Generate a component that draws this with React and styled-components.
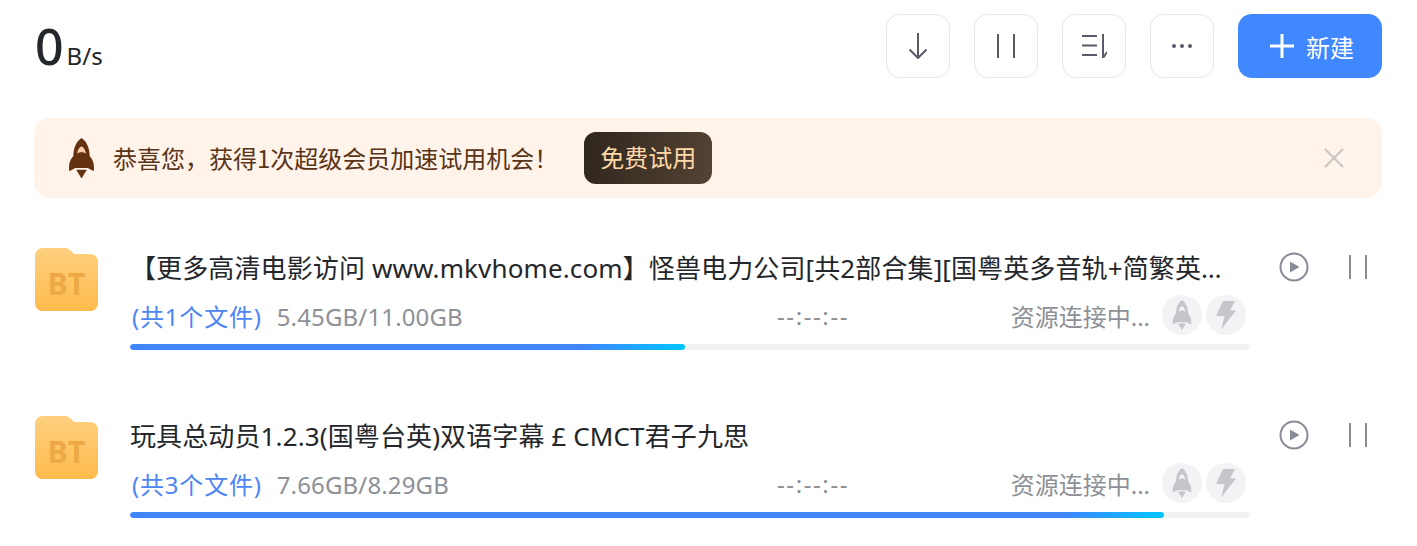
import styled, { createGlobalStyle } from 'styled-components'

const GlobalStyle = createGlobalStyle`
html, body {
  margin: 0;
  padding: 0;
  background: #fff;
  overflow: hidden;
  font-family: "Noto Sans", "Noto Sans CJK SC", sans-serif;
}
* { box-sizing: border-box; }
`;

const Page = styled.div`
display: flex;
flex-direction: column;
width: 1417px;
height: 546px;
padding: 14px 35px 0 34px;
`;

const Header = styled.div`
display: flex;
align-items: center;
justify-content: space-between;
height: 64px;
`;

const Speed = styled.div`
display: flex;
align-items: baseline;
color: #23262b;
padding-left: 1px;
`;

const SpeedValue = styled.span`
font-size: 50px;
font-weight: 500;
line-height: 64px;
margin-right: 3px;
`;

const SpeedUnit = styled.span`
font-size: 24px;
`;

const Toolbar = styled.div`
display: flex;
gap: 24px;
`;

const IconButton = styled.div`
display: flex;
align-items: center;
justify-content: center;
width: 64px;
height: 64px;
border: 1px solid #e6e7e9;
border-radius: 14px;
background: #fff;
color: #575b68;
`;

const NewButton = styled.div`
display: flex;
align-items: center;
justify-content: center;
gap: 12px;
width: 144px;
height: 64px;
padding-left: 4px;
border-radius: 14px;
background: #4088ff;
color: #fff;
font-size: 24px;
font-family: "Noto Sans CJK SC", sans-serif;
`;

const Banner = styled.div`
display: flex;
align-items: center;
height: 80px;
margin-top: 40px;
padding: 0 38px 0 34px;
border-radius: 16px;
background: #fff3ea;
`;

const BannerText = styled.div`
margin: -2px 0 0 18px;
color: #5a3417;
font-size: 24px;
font-family: "Noto Sans CJK SC", sans-serif;
`;

const TrialButton = styled.div`
display: flex;
align-items: center;
justify-content: center;
width: 128px;
height: 52px;
margin: 0 0 0 26px;
padding-bottom: 3px;
border-radius: 12px;
background: linear-gradient(100deg, #2f261d, #544334);
color: #ffd9a8;
font-size: 24px;
font-family: "Noto Sans CJK SC", sans-serif;
`;

const BannerClose = styled.div`
display: flex;
margin-left: auto;
color: #c9c6c3;
`;

const List = styled.div`
display: flex;
flex-direction: column;
gap: 60px;
margin-top: 50px;
`;

const Item = styled.div`
display: flex;
height: 108px;
`;

const FolderIcon = styled.div`
flex: none;
width: 64px;
margin-left: 1px;
`;

const ItemBody = styled.div`
display: flex;
flex-direction: column;
width: 1120px;
margin-left: 31px;
`;

const Title = styled.div`
height: 44px;
margin-top: -2px;
padding-right: 22px;
color: #23262b;
font-size: 26px;
letter-spacing: 0.120px;
line-height: 44px;
white-space: nowrap;
overflow: hidden;
text-overflow: ellipsis;
`;

const Meta = styled.div`
display: grid;
grid-template-columns: 647px 1fr auto;
align-items: center;
height: 44px;
margin-top: 3px;
font-size: 24px;
color: #8d9096;
`;

const MetaLeft = styled.div`
display: flex;
align-items: baseline;
gap: 15px;
padding-left: 2px;
white-space: nowrap;
`;

const FileCount = styled.span`
color: #4d85f5;
letter-spacing: 0.800px;
`;

const FileSize = styled.span`
letter-spacing: 0.150px;
`;

const Remaining = styled.div`
white-space: nowrap;
letter-spacing: 1.600px;
`;

const MetaRight = styled.div`
display: flex;
align-items: center;
gap: 4px;
padding-right: 4px;
white-space: nowrap;
`;

const Badge = styled.div`
display: flex;
align-items: center;
justify-content: center;
width: 40px;
height: 40px;
margin-left: ${(p) => p.$offset || 0}px;
border-radius: 50%;
background: #f2f3f5;
`;

const Track = styled.div`
height: 6px;
margin-top: 7px;
border-radius: 3px;
background: #f2f2f3;
overflow: hidden;
`;

const Fill = styled.div`
height: 100%;
border-radius: 3px;
background: linear-gradient(90deg, #3f87ff calc(100% - 100px), #00c6ff);
`;

const ItemActions = styled.div`
display: flex;
align-items: flex-start;
gap: 40px;
margin-left: 29px;
padding-top: 4px;
color: #878c96;
`;

const PauseSlot = styled.div`
display: flex;
padding-top: 3px;
`;

const items = [
  {
    title: '【更多高清电影访问 www.mkvhome.com】怪兽电力公司[共2部合集][国粤英多音轨+简繁英双语字幕]',
    files: '(共1个文件)',
    size: '5.45GB/11.00GB',
    progress: 49.55,
  },
  {
    title: '玩具总动员1.2.3(国粤台英)双语字幕 £ CMCT君子九思',
    files: '(共3个文件)',
    size: '7.66GB/8.29GB',
    progress: 92.3,
  },
];

const Rocket = ({ size, body, flame, window: win }) => (
  <svg width={size} height={size * 1.5} viewBox="0 0 28 42">
    <path
      d="M14 0C8.500 3.500 5.800 10 5.500 19 2.500 22 1 26 1 31.500c0 1.300.3 2.300.8 2.600L7.500 31h13l5.700 3.100c.5-.3.8-1.300.8-2.600 0-5.500-1.500-9.500-4.500-12.500C22.200 10 19.500 3.500 14 0z"
      fill={body}
    />
    <path d="M14 8.500c-2.800 1.500-4.200 4.200-4.500 7.800 2.500-2 6.500-2 9 0-.3-3.600-1.700-6.300-4.500-7.800z" fill={win} />
    <path d="M8.500 33h11L14 42z" fill={flame} />
  </svg>
);

const Bolt = () => (
  <svg width="20" height="28" viewBox="0 0 20 28">
    <path d="M7 0h12l-5 9.500h6L5.500 28 8.500 15H0z" fill="#c4c6cb" />
  </svg>
);

const Folder = () => (
  <svg width="63" height="63" viewBox="0 0 64 64">
    <defs>
      <linearGradient id="folderFill" x1="0" y1="0" x2="0" y2="1">
        <stop offset="0" stopColor="#ffd07f" />
        <stop offset="1" stopColor="#ffbb4c" />
      </linearGradient>
    </defs>
    <path
      d="M8 0h23c2 0 3.500 1 5 2.500L40 6h16c4.500 0 8 3.500 8 8v42c0 4.500-3.500 8-8 8H8c-4.500 0-8-3.500-8-8V8c0-4.500 3.500-8 8-8z"
      fill="url(#folderFill)"
    />
    <text x="32" y="48" textAnchor="middle" fontSize="31" fontWeight="700" fontFamily="Noto Sans, sans-serif" fill="#eda945">
      BT
    </text>
  </svg>
);

const Play = () => (
  <svg width="30" height="30" viewBox="0 0 30 30">
    <circle cx="15" cy="15" r="13.500" fill="none" stroke="currentColor" strokeWidth="2" />
    <path d="M11 9.500v11l9.500-5.500z" fill="currentColor" />
  </svg>
);

const Pause = ({ size = 24 }) => (
  <svg width="18" height={size} viewBox={`0 0 18 ${size}`}>
    <path d={`M1 0v${size}M17 0v${size}`} stroke="currentColor" strokeWidth="2" />
  </svg>
);

function App() {
  return (
    <Page>
      <GlobalStyle />
      <Header>
        <Speed>
          <SpeedValue>0</SpeedValue>
          <SpeedUnit>B/s</SpeedUnit>
        </Speed>
        <Toolbar>
          <IconButton>
            <svg width="20" height="26" viewBox="0 0 20 26">
              <path d="M10 0v25M1.500 16.500L10 25l8.500-8.500" fill="none" stroke="currentColor" strokeWidth="2" />
            </svg>
          </IconButton>
          <IconButton>
            <Pause />
          </IconButton>
          <IconButton>
            <svg width="26" height="24" viewBox="0 0 26 24">
              <path d="M1 2h15M1 11.500h15M1 21h15M22 0v24" fill="none" stroke="currentColor" strokeWidth="2" />
              <path d="M22 24l4-6" fill="none" stroke="currentColor" strokeWidth="2" />
            </svg>
          </IconButton>
          <IconButton>
            <svg width="22" height="6" viewBox="0 0 22 6">
              <circle cx="3" cy="3" r="2" fill="currentColor" />
              <circle cx="11" cy="3" r="2" fill="currentColor" />
              <circle cx="19" cy="3" r="2" fill="currentColor" />
            </svg>
          </IconButton>
          <NewButton>
            <svg width="24" height="24" viewBox="0 0 24 24">
              <path d="M12 0v24M0 12h24" stroke="#fff" strokeWidth="3" />
            </svg>
            新建
          </NewButton>
        </Toolbar>
      </Header>

      <Banner>
        <Rocket size={27} body="#643211" flame="#643211" window="#f6cfa8" />
        <BannerText>恭喜您，获得1次超级会员加速试用机会！</BannerText>
        <TrialButton>免费试用</TrialButton>
        <BannerClose>
          <svg width="20" height="20" viewBox="0 0 20 20">
            <path d="M1 1l18 18M19 1L1 19" stroke="currentColor" strokeWidth="2" />
          </svg>
        </BannerClose>
      </Banner>

      <List>
        {items.map((item) => (
          <Item key={item.files + item.size}>
            <FolderIcon>
              <Folder />
            </FolderIcon>
            <ItemBody>
              <Title>{item.title}</Title>
              <Meta>
                <MetaLeft>
                  <FileCount>{item.files}</FileCount>
                  <FileSize>{item.size}</FileSize>
                </MetaLeft>
                <Remaining>--:--:--</Remaining>
                <MetaRight>
                  资源连接中...
                  <Badge $offset={8}>
                    <Rocket size={20} body="#c4c6cb" flame="#c4c6cb" window="#f2f3f5" />
                  </Badge>
                  <Badge>
                    <Bolt />
                  </Badge>
                </MetaRight>
              </Meta>
              <Track>
                <Fill style={{ width: `${item.progress}%` }} />
              </Track>
            </ItemBody>
            <ItemActions>
              <Play />
              <PauseSlot>
                <Pause />
              </PauseSlot>
            </ItemActions>
          </Item>
        ))}
      </List>
    </Page>
  );
}

export default App;
